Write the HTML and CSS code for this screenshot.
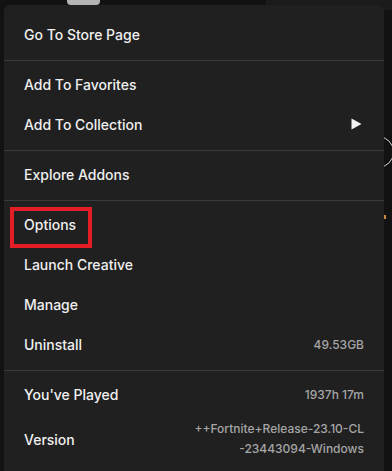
FILE: index.html
```html
<!DOCTYPE html>
<html>
<head>
<meta charset="utf-8">
<link rel="stylesheet" href="styles.css">
</head>
<body>
<div class="backdrop">
  <div class="tab"></div>
  <div class="topright"></div>
  <div class="ring"></div>
  <div class="spark"></div>
</div>
<div class="wrap">
  <div class="menu">
    <div class="section first">
      <div class="item"><span class="label">Go To Store Page</span></div>
    </div>
    <div class="section">
      <div class="item"><span class="label">Add To Favorites</span></div>
      <div class="item"><span class="label">Add To Collection</span>
        <svg class="arrow" width="11" height="12" viewBox="0 0 11 12"><path d="M0.5 0.5 L10.5 6 L0.5 11.5 Z" fill="#f2f2f2"/></svg>
      </div>
    </div>
    <div class="section">
      <div class="item"><span class="label">Explore Addons</span></div>
    </div>
    <div class="section">
      <div class="item"><span class="label">Options</span></div>
      <div class="item"><span class="label">Launch Creative</span></div>
      <div class="item"><span class="label">Manage</span></div>
      <div class="item"><span class="label">Uninstall</span><span class="value">49.53GB</span></div>
    </div>
    <div class="section">
      <div class="item"><span class="label">You've Played</span><span class="value">1937h 17m</span></div>
      <div class="item tall"><span class="label">Version</span><span class="value multi">++Fortnite+Release-23.10-CL<br>-23443094-Windows</span></div>
    </div>
  </div>
  <div class="highlight"></div>
</div>
</body>
</html>
```
FILE: styles.css
```css
html, body {
  margin: 0;
  padding: 0;
  background: #121212;
  width: 392px;
  height: 471px;
  overflow: hidden;
  font-family: Inter, "Noto Sans", "Liberation Sans", sans-serif;
}
.backdrop {
  position: absolute;
  inset: 0;
  z-index: 0;
}
.tab {
  position: absolute;
  left: 67px;
  top: -4px;
  width: 33px;
  height: 9px;
  border-radius: 4px;
  background: #b4b4b4;
}
.topright {
  position: absolute;
  left: 266px;
  top: 0;
  width: 126px;
  height: 10px;
  background: #1b1b1b;
  border-bottom-left-radius: 4px;
}
.ring {
  position: absolute;
  left: 362px;
  top: 136px;
  width: 30px;
  height: 30px;
  border: 1.5px solid #cfcfcf;
  border-radius: 50%;
}
.spark {
  position: absolute;
  left: 384px;
  top: 215px;
  width: 2px;
  height: 4px;
  background: #c98a3a;
}
.wrap {
  position: relative;
  z-index: 1;
  padding: 5px 0 0 4px;
}
.menu {
  width: 380px;
  background: #202020;
  border-radius: 6px 6px 0 0;
  padding-top: 5px;
  height: 470px;
  box-sizing: border-box;
}
.section {
  border-top: 1px solid #3a3a3a;
  padding: 4px 0 5px;
}
.section.first {
  border-top: none;
  padding: 5px 0 5px;
}
.item {
  display: flex;
  align-items: center;
  justify-content: space-between;
  height: 40px;
  padding: 0 20px 2px;
  box-sizing: border-box;
}
.item.tall {
  height: 50px;
}
.label {
  color: #f0f0f0;
  font-size: 14px;
  font-weight: 500;
}
.value {
  color: #a6a6a6;
  font-size: 12px;
  font-weight: 500;
  text-align: right;
}
.value.multi {
  line-height: 20px;
}
.arrow {
  margin-right: 2px;
}
.highlight {
  position: absolute;
  left: 10px;
  top: 207px;
  width: 82px;
  height: 41px;
  box-sizing: border-box;
  border: 4px solid #e41e26;
}
```
